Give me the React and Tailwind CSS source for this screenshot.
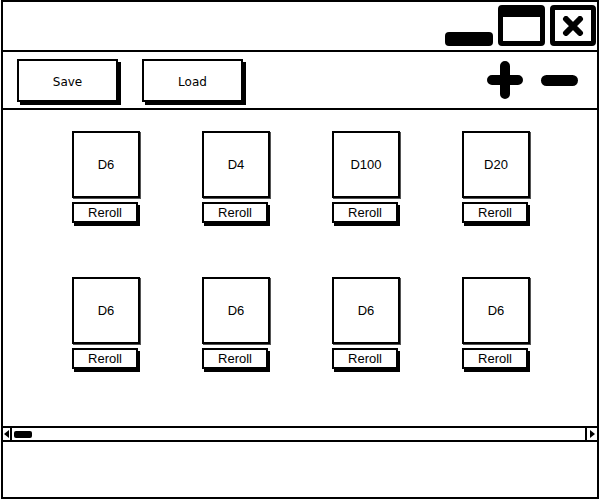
import React from 'react';

const dice = [
  ['D6', 'D4', 'D100', 'D20'],
  ['D6', 'D6', 'D6', 'D6'],
];

function Die({ label }) {
  return (
    <div className="flex flex-col w-[68px]">
      <div className="h-[67px] border-2 border-black bg-white flex items-center justify-center text-[13px] text-black shadow-[1px_1px_0_#555]">
        {label}
      </div>
      <button className="mt-[4px] w-[66px] h-[21px] border-2 border-black bg-white text-[13px] leading-none text-black shadow-[2px_3px_0_#000] flex items-center justify-center">
        Reroll
      </button>
    </div>
  );
}

function ToolButton({ children }) {
  return (
    <button className="w-[101px] h-[43px] border-2 border-black bg-white text-[12px] text-black shadow-[3px_3px_0_#000] flex items-center justify-center pt-[2px] font-['DejaVu_Sans',sans-serif]">
      {children}
    </button>
  );
}

export default function App() {
  return (
    <div className="w-[601px] h-[500px] bg-white pl-[1px] font-['Liberation_Sans',Arial,sans-serif]">
      <div className="w-[598px] h-[499px] border-2 border-black flex flex-col">
        {/* Title bar */}
        <div className="h-[50px] border-b-2 border-black flex items-end justify-end gap-[5px] pr-px pb-[4px]">
          <div className="w-[48px] h-[14px] bg-black rounded-[4px]" />
          <div className="w-[47px] h-[41px] border-[5px] border-t-[12px] border-black rounded-[4px] bg-white" />
          <div className="w-[46px] h-[41px] border-[5px] border-black rounded-[4px] bg-white flex items-center justify-center">
            <svg width="22" height="20" viewBox="0 0 22 20">
              <path d="M4 3 L18 17 M18 3 L4 17" stroke="#000" strokeWidth="6" strokeLinecap="round" />
            </svg>
          </div>
        </div>

        {/* Toolbar */}
        <div className="h-[58px] border-b-2 border-black flex items-start pt-[7px] pl-[14px] pr-[19px]">
          <ToolButton>Save</ToolButton>
          <div className="w-[24px]" />
          <ToolButton>Load</ToolButton>
          <div className="flex-1" />
          <div className="flex items-center gap-[18px] mt-[2px] h-[38px]">
            <svg width="36" height="38" viewBox="0 0 36 38">
              <path d="M18 5 L18 33 M5 19 L31 19" stroke="#000" strokeWidth="10" strokeLinecap="round" />
            </svg>
            <div className="w-[37px] h-[11px] bg-black rounded-full" />
          </div>
        </div>

        {/* Dice area */}
        <div className="h-[316px] flex flex-col gap-[54px] pt-[21px] pl-[69px]">
          {dice.map((row, i) => (
            <div key={i} className="flex gap-[62px]">
              {row.map((d, j) => (
                <Die key={j} label={d} />
              ))}
            </div>
          ))}
        </div>

        {/* Horizontal scrollbar */}
        <div className="h-[16px] border-y-2 border-black flex items-stretch">
          <div className="w-[9px] border-r-2 border-black flex items-center justify-center">
            <div className="w-0 h-0 border-y-[4px] border-y-transparent border-r-[5px] border-r-black" />
          </div>
          <div className="flex items-center pl-[2px]">
            <div className="w-[18px] h-[7px] bg-black rounded-[2px]" />
          </div>
          <div className="flex-1" />
          <div className="w-[12px] border-l-2 border-black flex items-center justify-center">
            <div className="w-0 h-0 border-y-[4px] border-y-transparent border-l-[5px] border-l-black" />
          </div>
        </div>

        {/* Status area */}
        <div className="flex-1" />
      </div>
    </div>
  );
}
